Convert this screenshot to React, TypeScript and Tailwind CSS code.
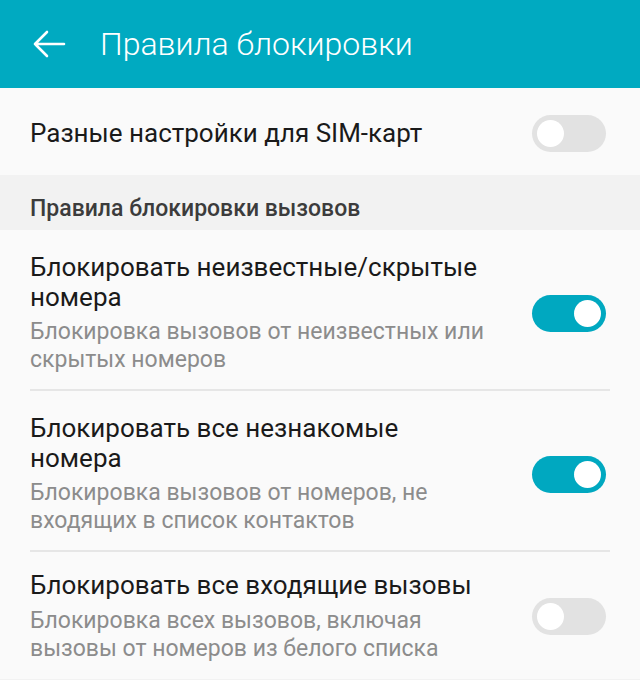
import React from 'react';

function Toggle({ on }: { on: boolean }) {
  return (
    <div
      className={`flex h-[37px] w-[74px] shrink-0 items-center rounded-full px-[5px] ${
        on ? 'justify-end bg-[#00a8c0]' : 'justify-start bg-[#e2e2e2]'
      }`}
    >
      <div className="h-[27px] w-[27px] rounded-full bg-white" />
    </div>
  );
}

type Item = { title: string[]; sub: string[]; on: boolean };

function Row({ item, last }: { item: Item; last: boolean }) {
  return (
    <div
      className={`mx-[30px] flex items-center justify-between ${
        last ? 'pt-[18px] pb-[16px]' : 'border-b-2 border-[#e6e6e6] pt-[22px] pb-[15px]'
      }`}
    >
      <div className="flex flex-col">
        {item.title.map((t) => (
          <div key={t} className="text-[26px] leading-[30px] text-[#1a1a1a]">
            {t}
          </div>
        ))}
        <div className={last ? 'mt-[7px]' : 'mt-[6px]'}>
          {item.sub.map((s) => (
            <div key={s} className="text-[23px] leading-[28px] text-[#8c8c8c]">
              {s}
            </div>
          ))}
        </div>
      </div>
      <div className="mr-[4px]">
        <Toggle on={item.on} />
      </div>
    </div>
  );
}

const items: Item[] = [
  {
    title: ['Блокировать неизвестные/скрытые', 'номера'],
    sub: ['Блокировка вызовов от неизвестных или', 'скрытых номеров'],
    on: true,
  },
  {
    title: ['Блокировать все незнакомые', 'номера'],
    sub: ['Блокировка вызовов от номеров, не', 'входящих в список контактов'],
    on: true,
  },
  {
    title: ['Блокировать все входящие вызовы'],
    sub: ['Блокировка всех вызовов, включая', 'вызовы от номеров из белого списка'],
    on: false,
  },
];

export default function App() {
  return (
    <div className="h-[680px] w-[640px] overflow-hidden bg-[#fafafa]" style={{ fontFamily: 'Roboto, "Noto Sans", sans-serif' }}>
      <div className="flex h-[88px] items-center bg-[#00aac1] pl-[32px]">
        <svg width="34" height="30" viewBox="0 0 34 30" fill="none" stroke="white" strokeWidth="2.6" strokeLinecap="round" strokeLinejoin="round">
          <path d="M32 15H3M15 3L3 15l12 12" />
        </svg>
        <div className="ml-[34px] text-[32px] font-light text-white">Правила блокировки</div>
      </div>

      <div className="flex h-[87px] items-center justify-between pl-[30px] pr-[34px] pt-[3px]">
        <div className="text-[26px] text-[#1a1a1a]">Разные настройки для SIM-карт</div>
        <Toggle on={false} />
      </div>

      <div className="flex h-[55px] items-center bg-[#f2f2f2] pl-[30px] pt-[14px] text-[23px] font-medium text-[#3c3c3c]">
        Правила блокировки вызовов
      </div>

      {items.map((it, i) => (
        <Row key={i} item={it} last={i === items.length - 1} />
      ))}
      <div className="h-[20px] bg-[#f2f2f2]" />
    </div>
  );
}
